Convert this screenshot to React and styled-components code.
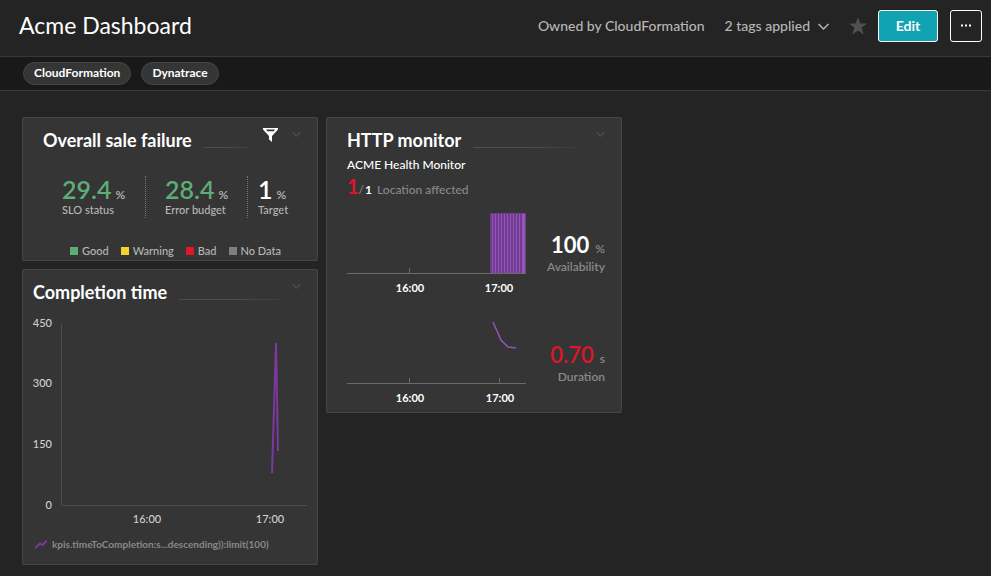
import React from "react";
import styled, { createGlobalStyle } from "styled-components";

const color = {
  page: "#242424",
  bar: "#191919",
  tile: "#353535",
  line: "#454646",
  divider: "#393939",
  text: "#ffffff",
  soft: "#b7b7b7",
  muted: "#898989",
  good: "#5ead76",
  warning: "#f5d22d",
  bad: "#dc172a",
  none: "#808080",
  purple: "#7c38a1",
  lilac: "#9355b7",
  plum: "#723b92",
  teal: "#12a3b3",
};

const GlobalStyle = createGlobalStyle`
  *, *::before, *::after { box-sizing: border-box; }
  body {
    margin: 0;
    background: ${color.page};
    color: ${color.text};
    font-family: Lato, "Open Sans", sans-serif;
    font-size: 12px;
    font-weight: 500;
    line-height: 16px;
  }
  h1, h2, p, ul, dl, dd, dt { margin: 0; padding: 0; }
  svg { display: block; flex: none; }
`;

const Page = styled.div`
  min-height: 100vh;
`;

const Header = styled.header`
  display: flex;
  align-items: center;
  min-height: 57px;
  padding: 0 9px 4px 19px;
  border-bottom: 1px solid ${color.divider};
`;

const PageTitle = styled.h1`
  flex: 1;
  padding-bottom: 2px;
  font-size: 23px;
  line-height: 32px;
  font-weight: 400;
`;

const Owner = styled.p`
  margin-right: 20px;
  color: ${color.soft};
  font-size: 14px;
  line-height: 20px;
`;

const TagsToggle = styled.button`
  display: flex;
  align-items: center;
  gap: 8px;
  margin-right: 20px;
  padding: 0;
  border: 0;
  background: none;
  color: ${color.soft};
  font: inherit;
  font-size: 14px;
  line-height: 20px;
`;

const StarButton = styled.button`
  display: flex;
  margin-right: 11px;
  padding: 0;
  border: 0;
  background: none;
  color: #4f5151;
`;

const ActionButton = styled.button`
  display: flex;
  align-items: center;
  justify-content: center;
  height: 32px;
  width: ${(p) => (p.$primary ? "60px" : "32px")};
  margin-left: ${(p) => (p.$primary ? "0" : "12px")};
  padding: 0;
  border: 1px solid #ffffff;
  border-radius: 3px;
  background: ${(p) => (p.$primary ? color.teal : color.page)};
  color: ${color.text};
  font: inherit;
  font-size: 14px;
  font-weight: 700;
`;

const TagBar = styled.ul`
  display: flex;
  align-items: center;
  gap: 10px;
  min-height: 34px;
  padding: 0 23px;
  list-style: none;
  background: ${color.bar};
  border-bottom: 1px solid ${color.divider};
`;

const Tag = styled.li`
  padding: 2px 10px 3px;
  border: 1px solid ${color.line};
  border-radius: 12px;
  background: ${color.tile};
  font-size: 12px;
  font-weight: 700;
`;

const Board = styled.main`
  display: grid;
  grid-template-columns: repeat(2, 296px);
  grid-auto-rows: minmax(144px, auto);
  gap: 8px;
  padding: 26px 22px 11px;
`;

const Tile = styled.section`
  grid-column: ${(p) => p.$column};
  grid-row: ${(p) => p.$rows};
  display: flex;
  flex-direction: column;
  border: 1px solid ${color.line};
  border-radius: 2px;
  background: ${color.tile};
`;

const TileHeader = styled.div`
  display: flex;
  align-items: flex-start;
  padding: 10px 16px 0 ${(p) => (p.$inset ? "20px" : "10px")};
`;

const TileTitle = styled.h2`
  padding: 1px 0 2px;
  font-size: 18px;
  line-height: 22px;
  font-weight: 700;
`;

const Rule = styled.span`
  flex: 1;
  height: 1px;
  margin: 19px ${(p) => p.$end}px 0 12px;
  background: linear-gradient(90deg, #4c4c4c 60%, #3c3c3c);
`;

const IconButton = styled.button`
  display: flex;
  margin-left: ${(p) => (p.$spaced ? "14px" : "0")};
  padding: 0;
  border: 0;
  background: none;
  color: ${(p) => (p.$bright ? color.text : "#4c4c4c")};
`;

const Stats = styled.dl`
  display: flex;
  margin: 23px 0 0 39px;
`;

const Stat = styled.div`
  display: flex;
  flex-direction: column-reverse;
  width: ${(p) => p.$width};
  margin-right: ${(p) => p.$gap};
  border-right: ${(p) => (p.$last ? "0" : "1px dotted #757575")};
`;

const StatLabel = styled.dt`
  color: ${color.soft};
  font-size: 11px;
  line-height: 16px;
`;

const StatValue = styled.dd`
  color: ${(p) => p.$tone};
  font-size: 25px;
  line-height: 26px;
  font-weight: 600;
`;

const Unit = styled.small`
  margin-left: ${(p) => (p.$wide ? "6px" : "4px")};
  color: ${(p) => (p.$wide ? color.muted : color.soft)};
  font-size: 12px;
  line-height: 1;
  font-weight: 600;
`;

const Legend = styled.ul`
  display: flex;
  justify-content: center;
  gap: 12px;
  margin-top: auto;
  padding-bottom: 1px;
  padding-left: 11px;
  list-style: none;
`;

const LegendItem = styled.li`
  display: flex;
  align-items: center;
  gap: 4px;
  color: ${color.soft};
  font-size: 11px;

  &::before {
    content: "";
    width: 8px;
    height: 8px;
    background: ${(p) => p.$tone};
  }
`;

const ChartBody = styled.div`
  padding: 10px;
`;

const Chart = styled.svg`
  width: 100%;
  height: auto;
  font-size: 11px;
  fill: #d0d0d0;
`;

const Series = styled.p`
  display: flex;
  align-items: center;
  gap: 5px;
  margin-top: 9px;
  padding-left: 2px;
  color: ${color.muted};
  font-size: 10px;
  font-weight: 700;
`;

const MonitorBody = styled.div`
  padding: 3px 16px 0 20px;
`;

const MonitorName = styled.p`
  font-size: 12px;
  line-height: 18px;
`;

const Locations = styled.p`
  display: flex;
  align-items: baseline;
  line-height: 24px;
  color: ${color.muted};
`;

const Affected = styled.strong`
  color: ${color.bad};
  font-size: 20px;
  line-height: 24px;
  font-weight: 700;
`;

const Small = styled.span`
  line-height: 16px;
`;

const Total = styled.strong`
  margin: 0 5px 0 1px;
  color: ${color.text};
  line-height: 16px;
`;

const Metric = styled.div`
  display: flex;
  justify-content: space-between;
  margin-top: ${(p) => (p.$first ? "12px" : "24px")};
`;

const MetricChart = styled(Chart)`
  width: 179px;
  font-weight: 700;
  fill: ${color.text};
`;

const Reading = styled.dl`
  display: flex;
  flex-direction: column-reverse;
  justify-content: flex-end;
  align-self: ${(p) => (p.$low ? "flex-end" : "center")};
  padding-${(p) => (p.$low ? "bottom: 20px" : "top: 2px")};
  text-align: right;
`;

const ReadingValue = styled.dd`
  color: ${(p) => p.$tone};
  font-size: 22px;
  line-height: 26px;
  font-weight: ${(p) => (p.$strong ? 700 : 600)};
`;

const ReadingLabel = styled.dt`
  color: ${color.muted};
  font-size: 12px;
  line-height: 18px;
  font-weight: 600;
`;

function Chevron() {
  return (
    <svg width="11" height="11" viewBox="0 0 11 11" fill="none" stroke="currentColor" strokeWidth="1.5" aria-hidden="true">
      <path d="M0.5 3 5.500 8 10.500 3" />
    </svg>
  );
}

function TileMenu({ spaced = false }) {
  return (
    <IconButton type="button" $spaced={spaced} aria-label="Tile menu">
      <svg width="9" height="12" viewBox="0 0 9 12" fill="none" stroke="currentColor" strokeWidth="1.3" aria-hidden="true">
        <path d="M0.5 4 4.5 8 8.5 4" />
      </svg>
    </IconButton>
  );
}

const stats = [
  { label: "SLO status", value: "29.4", tone: color.good, width: "84px", gap: "19px" },
  { label: "Error budget", value: "28.4", tone: color.good, width: "83px", gap: "10px" },
  { label: "Target", value: "1", tone: color.text, width: "auto", gap: "0", last: true },
];

const legend = [
  ["Good", color.good],
  ["Warning", color.warning],
  ["Bad", color.bad],
  ["No Data", color.none],
];

const yTicks = [
  ["450", 12],
  ["300", 72],
  ["150", 133],
  ["0", 194],
];

const barGaps = Array.from({ length: 10 }, (_, i) => 145 + i * 3);

function SloTile() {
  return (
    <Tile $column="1" $rows="1">
      <TileHeader $inset>
        <TileTitle>Overall sale failure</TileTitle>
        <Rule $end={14} />
        <IconButton type="button" $bright aria-label="Filter">
          <svg width="15" height="14" viewBox="0 0 15 14" aria-hidden="true">
            <path d="M0 0H15V1.500L9 8V14L6 11.500V8L0 1.500ZM3 1.500 4.200 3.200H10.800L12 1.500Z" fill="currentColor" fillRule="evenodd" />
          </svg>
        </IconButton>
        <TileMenu spaced />
      </TileHeader>
      <Stats>
        {stats.map((s) => (
          <Stat key={s.label} $width={s.width} $gap={s.gap} $last={s.last}>
            <StatLabel>{s.label}</StatLabel>
            <StatValue $tone={s.tone}>
              {s.value}
              <Unit>%</Unit>
            </StatValue>
          </Stat>
        ))}
      </Stats>
      <Legend>
        {legend.map(([name, tone]) => (
          <LegendItem key={name} $tone={tone}>{name}</LegendItem>
        ))}
      </Legend>
    </Tile>
  );
}

function CompletionTile() {
  return (
    <Tile $column="1" $rows="2 / span 2">
      <TileHeader>
        <TileTitle>Completion time</TileTitle>
        <Rule $end={9} />
        <TileMenu />
      </TileHeader>
      <ChartBody>
        <Chart viewBox="0 0 274 212" role="img" aria-label="Completion time chart">
          <path d="M28.5 8V190.500H274" fill="none" stroke="#4c4c4c" />
          {yTicks.map(([label, y]) => (
            <text key={label} x="19" y={y} textAnchor="end">{label}</text>
          ))}
          <text x="114" y="208" textAnchor="middle">16:00</text>
          <text x="237" y="208" textAnchor="middle">17:00</text>
          <path d="M239 158 243 28 245 136" fill="none" stroke={color.purple} strokeWidth="2" strokeLinejoin="bevel" />
        </Chart>
        <Series>
          <svg width="12" height="9" viewBox="0 0 12 9" fill="none" stroke={color.purple} strokeWidth="2" aria-hidden="true">
            <path d="M0 8 5 3.500 7.500 5 12 0.500" />
          </svg>
          kpis.timeToCompletion:s...descending)):limit(100)
        </Series>
      </ChartBody>
    </Tile>
  );
}

function MonitorTile() {
  return (
    <Tile $column="2" $rows="1 / span 2">
      <TileHeader $inset>
        <TileTitle>HTTP monitor</TileTitle>
        <Rule $end={21} />
        <TileMenu />
      </TileHeader>
      <MonitorBody>
        <MonitorName>ACME Health Monitor</MonitorName>
        <Locations>
          <Affected>1</Affected>
          <Small>/</Small>
          <Total>1</Total>
          <Small>Location affected</Small>
        </Locations>
        <Metric $first>
          <MetricChart viewBox="0 0 179 86" role="img" aria-label="Availability chart">
            <rect x="143" y="3" width="36" height="60" fill={color.plum} />
            <path d={barGaps.map((x) => `M${x}.5 4V63`).join("")} fill="none" stroke={color.lilac} />
            <rect x="175" y="4" width="3" height="59" fill={color.lilac} />
            <path d="M0 63.5H179M62.500 58V63" fill="none" stroke="#6b6b6b" />
            <text x="63" y="82" textAnchor="middle">16:00</text>
            <text x="152" y="82" textAnchor="middle">17:00</text>
          </MetricChart>
          <Reading>
            <ReadingLabel>Availability</ReadingLabel>
            <ReadingValue $tone={color.text} $strong>
              100<Unit $wide>%</Unit>
            </ReadingValue>
          </Reading>
        </Metric>
        <Metric>
          <MetricChart viewBox="0 0 179 86" role="img" aria-label="Duration chart">
            <path d="M146 2 154 20 161 27 169 28" fill="none" stroke={color.lilac} strokeWidth="1.5" />
            <path d="M0 63.5H179M62.500 58V63M152.500 58V63" fill="none" stroke="#6b6b6b" />
            <text x="63" y="82" textAnchor="middle">16:00</text>
            <text x="153" y="82" textAnchor="middle">17:00</text>
          </MetricChart>
          <Reading $low>
            <ReadingLabel>Duration</ReadingLabel>
            <ReadingValue $tone={color.bad}>
              0.70<Unit $wide>s</Unit>
            </ReadingValue>
          </Reading>
        </Metric>
      </MonitorBody>
    </Tile>
  );
}

export default function App() {
  return (
    <Page>
      <GlobalStyle />
      <Header>
        <PageTitle>Acme Dashboard</PageTitle>
        <Owner>Owned by CloudFormation</Owner>
        <TagsToggle type="button">
          2 tags applied
          <Chevron />
        </TagsToggle>
        <StarButton type="button" aria-label="Add to favorites">
          <svg width="18" height="18" viewBox="0 0 18 18" aria-hidden="true">
            <path d="M9 0 11.300 6.500H18L12.600 10.700 14.700 17.500 9 13.500 3.300 17.500 5.400 10.700 0 6.500H6.700Z" fill="currentColor" />
          </svg>
        </StarButton>
        <ActionButton type="button" $primary>Edit</ActionButton>
        <ActionButton type="button" aria-label="More actions">
          <svg width="10" height="4" viewBox="0 0 10 4" fill="currentColor" aria-hidden="true">
            <path d="M0 0.500h2v2H0ZM4 0.500h2v2H4ZM8 0.500h2v2H8Z" />
          </svg>
        </ActionButton>
      </Header>
      <TagBar>
        <Tag>CloudFormation</Tag>
        <Tag>Dynatrace</Tag>
      </TagBar>
      <Board>
        <SloTile />
        <MonitorTile />
        <CompletionTile />
      </Board>
    </Page>
  );
}
